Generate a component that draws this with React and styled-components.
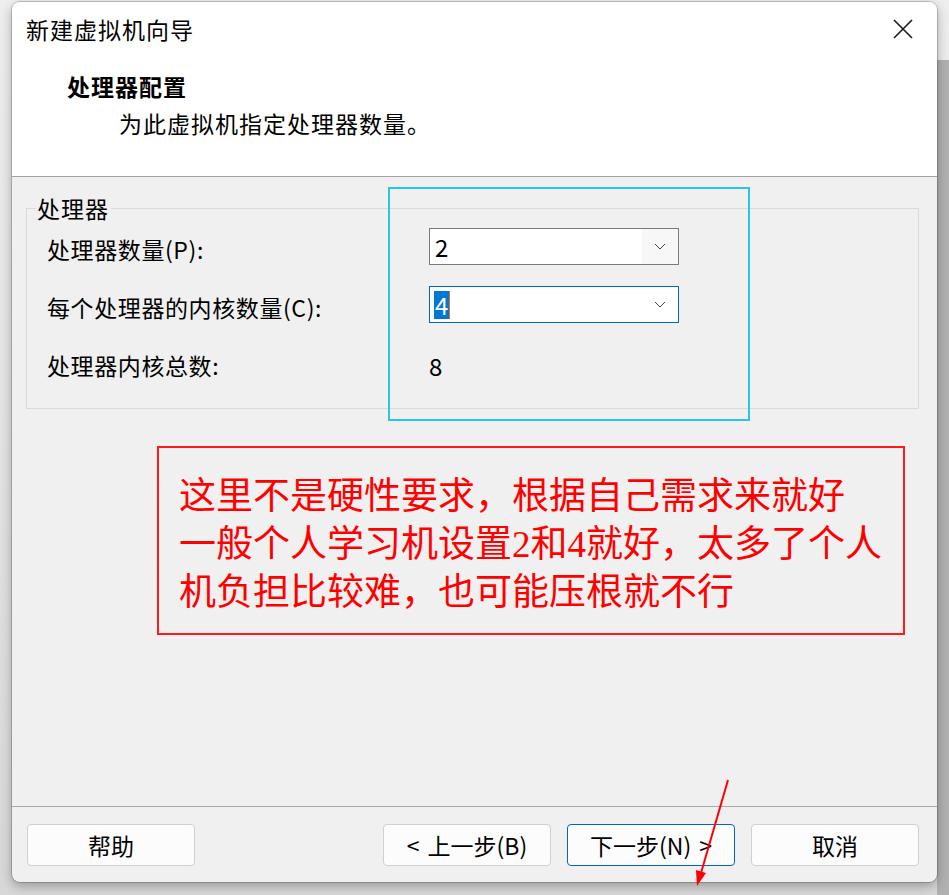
import React from "react";
import styled, { createGlobalStyle } from "styled-components";

const GlobalStyle = createGlobalStyle`
  html, body {
    margin: 0;
    padding: 0;
  }
  body {
    width: 949px;
    height: 895px;
    overflow: hidden;
    font-family: "Noto Sans CJK SC", "Noto Sans", sans-serif;
    background:
      linear-gradient(#b1b1b1, #b1b1b1) no-repeat right 0 top 60px / 12px 100%,
      linear-gradient(#eeeeee, #d8d8d8);
  }
`;

const Page = styled.div`
  position: relative;
  width: 949px;
  height: 895px;
  padding: 2px 0 0 12px;
  box-sizing: border-box;
`;

const Window = styled.div`
  width: 925px;
  height: 880px;
  display: flex;
  flex-direction: column;
  border-radius: 8px;
  overflow: hidden;
  background: #f0f0f0;
  box-shadow: 0 0 0 1px rgba(0, 0, 0, 0.18), 0 4px 12px rgba(0, 0, 0, 0.3);
`;

const Header = styled.header`
  height: 174px;
  background: #ffffff;
  border-bottom: 1px solid #a3a3a3;
  display: flex;
  flex-direction: column;
`;

const TitleBar = styled.div`
  display: flex;
  align-items: center;
  justify-content: space-between;
  padding: 11px 20px 0 14px;
`;

const Title = styled.div`
  font-size: 23px;
  letter-spacing: 1px;
  line-height: 32px;
  color: #000;
`;

const CloseButton = styled.div`
  width: 28px;
  height: 28px;
  display: flex;
  align-items: center;
  justify-content: center;
`;

const Heading = styled.div`
  margin-top: 25px;
  padding-left: 55px;
  font-size: 23px;
  letter-spacing: 1px;
  line-height: 32px;
  font-weight: 700;
  color: #000;
`;

const Subheading = styled.div`
  margin-top: 5px;
  padding-left: 107px;
  font-size: 23px;
  letter-spacing: 1px;
  line-height: 32px;
  color: #000;
`;

const Body = styled.main`
  flex: 1;
  display: flex;
  flex-direction: column;
`;

const GroupWrap = styled.div`
  position: relative;
  margin: 20px 18px 0 14px;
`;

const Group = styled.fieldset`
  margin: 0;
  border: 1px solid #dadada;
  padding: 9px 0 27px 20px;
`;

const Legend = styled.legend`
  margin-left: -12px;
  padding: 0 2px;
  font-size: 23px;
  letter-spacing: 1px;
  line-height: 22px;
  color: #000;
`;

const Grid = styled.div`
  display: grid;
  grid-template-columns: 382px 250px;
  grid-auto-rows: 37px;
  row-gap: 21px;
  align-items: center;
`;

const Label = styled.div`
  font-size: 23px;
  letter-spacing: 0.6px;
  line-height: 37px;
  padding-top: 6px;
  color: #000;
`;

const Combo = styled.div`
  height: 37px;
  box-sizing: border-box;
  border: 1px solid ${(p) => (p.$focused ? "#0067c0" : "#7a7a7a")};
  background: #fff;
  display: flex;
  align-items: stretch;
`;

const ComboValue = styled.div`
  flex: 1;
  display: flex;
  align-items: center;
  padding-left: ${(p) => (p.$focused ? "4px" : "5px")};
  font-size: 24px;
  color: #000;
`;

const Selected = styled.span`
  background: #0078d7;
  color: #fff;
  line-height: 28px;
  padding: 0 1px;
  border-right: 1px solid #e0701a;
`;

const DropButton = styled.div`
  width: 36px;
  display: flex;
  align-items: center;
  justify-content: center;
  background: ${(p) => (p.$shaded ? "#f7f7f7" : "transparent")};
`;

const Value = styled.div`
  font-size: 24px;
  line-height: 37px;
  padding: 6px 0 0 0;
  color: #000;
`;

const Highlight = styled.div`
  position: absolute;
  left: 362px;
  top: -10px;
  width: 362px;
  height: 234px;
  box-sizing: border-box;
  border: 2px solid #2cc2f2;
  pointer-events: none;
`;

const Note = styled.div`
  margin: 37px 0 0 145px;
  width: 748px;
  box-sizing: border-box;
  border: 2px solid #ff1a1a;
  padding: 25px 6px 16px 20px;
  font-family: "Liberation Serif", "Noto Sans CJK SC", serif;
  font-size: 37px;
  line-height: 48px;
  color: #ff0000;
`;

const Footer = styled.footer`
  border-top: 1px solid #a8a8a8;
  padding: 17px 18px 16px 15px;
  display: flex;
  justify-content: space-between;
`;

const ButtonGroup = styled.div`
  display: flex;
  gap: 16px;
`;

const Button = styled.button`
  width: 168px;
  height: 42px;
  box-sizing: border-box;
  border-radius: 4px;
  border: 1px solid ${(p) => (p.$primary ? "#0067c0" : "#d0d0d0")};
  background: #fcfcfc;
  font-family: "Noto Sans CJK SC", "Noto Sans", sans-serif;
  font-size: 23px;
  color: #000;
  padding: 0;
  display: flex;
  align-items: center;
  justify-content: center;
  gap: 8px;
`;

const Arrow = styled.svg`
  position: absolute;
  left: 0;
  top: 0;
  pointer-events: none;
`;

const Chevron = () => (
  <svg width="12" height="7" viewBox="0 0 12 7">
    <path d="M1 1 L6 6 L11 1" fill="none" stroke="#444" strokeWidth="1" />
  </svg>
);

export default function App() {
  return (
    <>
      <GlobalStyle />
      <Page>
        <Window>
          <Header>
            <TitleBar>
              <Title>新建虚拟机向导</Title>
              <CloseButton>
                <svg width="20" height="20" viewBox="0 0 20 20">
                  <path d="M1 1 L19 19 M19 1 L1 19" stroke="#1a1a1a" strokeWidth="1.6" />
                </svg>
              </CloseButton>
            </TitleBar>
            <Heading>处理器配置</Heading>
            <Subheading>为此虚拟机指定处理器数量。</Subheading>
          </Header>
          <Body>
            <GroupWrap>
              <Group>
                <Legend>处理器</Legend>
                <Grid>
                  <Label>处理器数量(P):</Label>
                  <Combo>
                    <ComboValue>2</ComboValue>
                    <DropButton $shaded>
                      <Chevron />
                    </DropButton>
                  </Combo>
                  <Label>每个处理器的内核数量(C):</Label>
                  <Combo $focused>
                    <ComboValue $focused>
                      <Selected>4</Selected>
                    </ComboValue>
                    <DropButton>
                      <Chevron />
                    </DropButton>
                  </Combo>
                  <Label>处理器内核总数:</Label>
                  <Value>8</Value>
                </Grid>
              </Group>
              <Highlight />
            </GroupWrap>
            <Note>
              这里不是硬性要求，根据自己需求来就好
              <br />
              一般个人学习机设置2和4就好，太多了个人
              <br />
              机负担比较难，也可能压根就不行
            </Note>
          </Body>
          <Footer>
            <Button>帮助</Button>
            <ButtonGroup>
              <Button>
                <span>&lt;</span>
                <span>上一步(B)</span>
              </Button>
              <Button $primary>
                <span>下一步(N)</span>
                <span>&gt;</span>
              </Button>
              <Button>取消</Button>
            </ButtonGroup>
          </Footer>
        </Window>
        <Arrow width="949" height="895" viewBox="0 0 949 895">
          <line x1="728" y1="780" x2="701" y2="873" stroke="#ff0000" strokeWidth="2" />
          <polygon points="697,886 706,873 696,870" fill="#ff0000" />
        </Arrow>
      </Page>
    </>
  );
}
